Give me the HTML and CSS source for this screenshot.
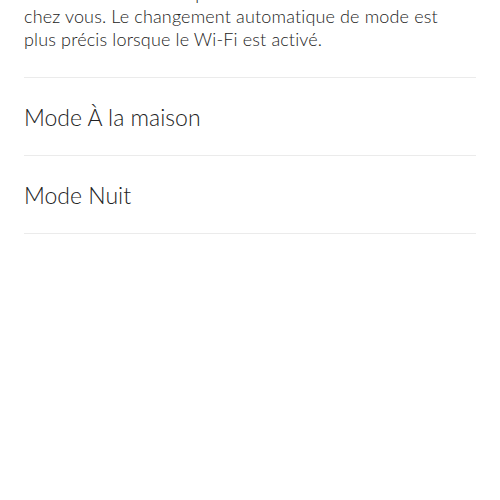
FILE: index.html
```html
<!DOCTYPE html>
<html lang="fr">
<head>
  <meta charset="UTF-8" />
  <meta name="viewport" content="width=device-width, initial-scale=1.0"/>
  <title>Modes</title>
  <link rel="stylesheet" href="styles.css">
</head>
<body>

  <div class="screen">
    <!-- Intro text, scrolled partly out of view -->
    <p class="intro">
      Votre thermostat sait parfaitement si vous êtes<br>
      chez vous. Le changement automatique de mode est<br>
      plus précis lorsque le Wi-Fi est activé.
    </p>

    <!-- Mode list -->
    <ul class="modes">
      <li class="mode">Mode À la maison</li>
      <li class="mode">Mode Nuit</li>
    </ul>
  </div>

</body>
</html>
```

FILE: styles.css
```css
body {
  margin: 0;
  padding: 0;
  background: #fff;
  font-family: 'Lato', 'Open Sans', sans-serif;
  font-weight: 300;
  color: #222;
}
.screen {
  padding: 0 24px;
  overflow: hidden;
  height: 500px;
}
.intro {
  margin: -18px 0 0;
  padding-bottom: 26px;
  font-size: 18px;
  line-height: 23px;
  letter-spacing: 0.15px;
  white-space: nowrap;
  border-bottom: 1px solid #ebebeb;
}
.modes {
  list-style: none;
  margin: 0;
  padding: 0;
}
.mode {
  display: flex;
  align-items: center;
  height: 77px;
  font-size: 23px;
  border-bottom: 1px solid #ebebeb;
}
```
